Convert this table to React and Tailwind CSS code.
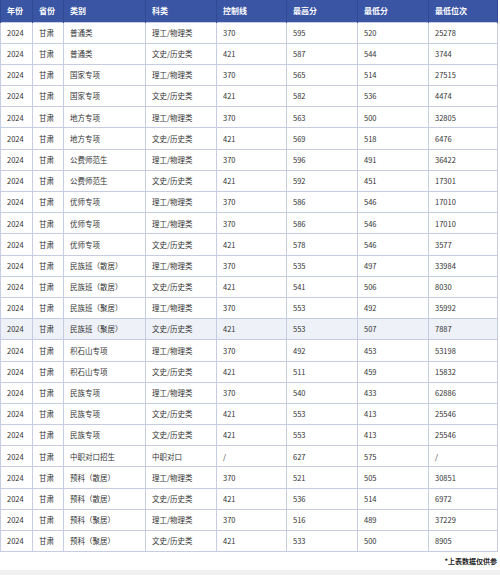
import React from "react";

const rows = [
  ["普通类", "理工/物理类", "370", "595", "520", "25278"],
  ["普通类", "文史/历史类", "421", "587", "544", "3744"],
  ["国家专项", "理工/物理类", "370", "565", "514", "27515"],
  ["国家专项", "文史/历史类", "421", "582", "536", "4474"],
  ["地方专项", "理工/物理类", "370", "563", "500", "32805"],
  ["地方专项", "文史/历史类", "421", "569", "518", "6476"],
  ["公费师范生", "理工/物理类", "370", "596", "491", "36422"],
  ["公费师范生", "文史/历史类", "421", "592", "451", "17301"],
  ["优师专项", "理工/物理类", "370", "586", "546", "17010"],
  ["优师专项", "理工/物理类", "370", "586", "546", "17010"],
  ["优师专项", "文史/历史类", "421", "578", "546", "3577"],
  ["民族班（散居）", "理工/物理类", "370", "535", "497", "33984"],
  ["民族班（散居）", "文史/历史类", "421", "541", "506", "8030"],
  ["民族班（聚居）", "理工/物理类", "370", "553", "492", "35992"],
  ["民族班（聚居）", "文史/历史类", "421", "553", "507", "7887"],
  ["积石山专项", "理工/物理类", "370", "492", "453", "53198"],
  ["积石山专项", "文史/历史类", "421", "511", "459", "15832"],
  ["民族专项", "理工/物理类", "370", "540", "433", "62886"],
  ["民族专项", "文史/历史类", "421", "553", "413", "25546"],
  ["民族专项", "文史/历史类", "421", "553", "413", "25546"],
  ["中职对口招生", "中职对口", "/", "627", "575", "/"],
  ["预科（散居）", "理工/物理类", "370", "521", "505", "30851"],
  ["预科（散居）", "文史/历史类", "421", "536", "514", "6972"],
  ["预科（聚居）", "理工/物理类", "370", "516", "489", "37229"],
  ["预科（聚居）", "文史/历史类", "421", "533", "500", "8905"],
];

const headers = ["年份", "省份", "类别", "科类", "控制线", "最高分", "最低分", "最低位次"];
const widths = ["w-[32px]", "w-[31px]", "w-[82px]", "w-[71px]", "w-[70px]", "w-[71px]", "w-[71px]", "w-[69px]"];

export default function App() {
  return (
    <div className="w-[500px] h-[575px] bg-white overflow-hidden" style={{ fontFamily: '"Noto Sans CJK SC", "Noto Sans", sans-serif' }}>
      <table className="w-[497px] table-fixed border-collapse text-[7.5px] text-[#333] leading-none">
        <thead>
          <tr className="bg-[#3a55a4] text-white h-[22px]">
            {headers.map((h, i) => (
              <th key={h} className={clsx(widths[i], "text-left font-bold pl-[6px] border-x border-[#2f4a93] text-[8px]")}>
                {h}
              </th>
            ))}
          </tr>
        </thead>
        <tbody>
          {rows.map((r, i) => (
            <tr key={i} className={clsx("h-[21.2px]", i === 14 ? "bg-[#eef1f8]" : "bg-white")}>
              {["2024", "甘肃", ...r].map((c, j) => (
                <td key={j} className="border border-[#c6cde2] pl-[6px] py-0 whitespace-nowrap overflow-hidden">
                  {c}
                </td>
              ))}
            </tr>
          ))}
        </tbody>
      </table>
      <div className="flex justify-end pr-[3px] pt-[6px] text-[7px] leading-none font-bold text-[#222]">*上表数据仅供参</div>
      <div className="mt-[5px] h-[8px] bg-[#f1f1f1]" />
    </div>
  );
}

function clsx(...a) {
  return a.filter(Boolean).join(" ");
}
